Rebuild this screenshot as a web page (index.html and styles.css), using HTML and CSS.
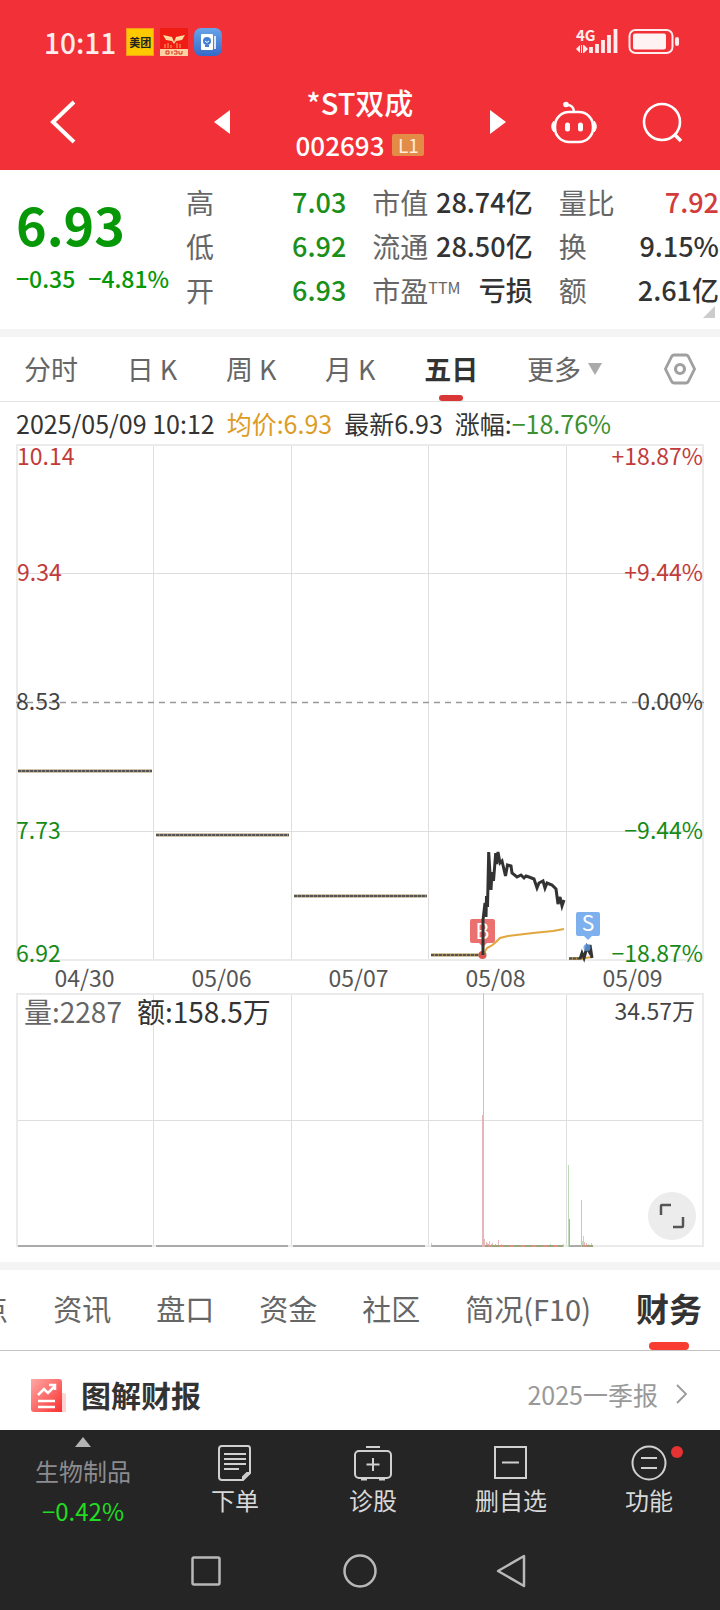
FILE: index.html
```html
<!DOCTYPE html>
<html lang="zh-CN">
<head>
    <meta charset="UTF-8">
    <meta name="viewport" content="width=device-width, initial-scale=1.0">
    <title>*ST双成 002693</title>
    <link rel="stylesheet" href="styles.css">
</head>
<body>
    <header class="top">
        <div class="status-bar">
            <span class="clock">10:11</span>
            <span class="app-icon meituan">美团</span>
            <svg class="app-icon" viewBox="0 0 28 28">
                <rect width="28" height="28" fill="#ee1c12"/>
                <path d="M3 7l9 2 2 5 2-5 9-2-3 5-6 1-2 3-2-3-6-1z" fill="#ffd9a0"/>
                <path d="M5 20v-4M8 20v-5M11 20v-3M17 20v-5M20 20v-4" stroke="#ff7a4a" stroke-width="1.5"/>
                <rect y="21" width="28" height="7" fill="#ffd2a6"/>
                <path d="M6 23h3v3H6zM12 23v3M14 23h3v3h-3M19 23v3h3v-3" fill="none" stroke="#d33019"/>
            </svg>
            <svg class="app-icon" viewBox="0 0 28 28">
                <defs>
                    <linearGradient id="blue" x1="0" y1="0" x2="0" y2="1">
                        <stop offset="0" stop-color="#69a3e8"/>
                        <stop offset="1" stop-color="#3569c9"/>
                    </linearGradient>
                </defs>
                <rect width="28" height="28" rx="7" fill="url(#blue)"/>
                <rect x="7" y="6" width="12" height="16" rx="1" fill="#fff"/>
                <path d="M21 8v13" stroke="#dbe8fb" stroke-width="2"/>
                <circle cx="13" cy="13" r="4" fill="#4380d3"/>
                <path d="M11 17h4v2h-4z" fill="#4380d3"/>
                <path d="M11 13l2 1.500 2-1.500" stroke="#fff" fill="none"/>
            </svg>
            <span class="spacer"></span>
            <svg class="signal" viewBox="0 0 42 28">
                <text x="0" y="13" class="signal-text">4G</text>
                <path d="M0 21l4-4v8zM12 21l-4-4v8z" fill="#ffecec"/>
                <path d="M5.500 17v8M7.500 17v8" stroke="#ffecec" stroke-width="1"/>
                <path d="M15 25v-6M21 25v-9M27 25V12M33 25V7M39.500 25V1" stroke="#ffecec" stroke-width="3.800" stroke-linecap="butt"/>
            </svg>
            <svg class="battery" viewBox="0 0 52 28">
                <rect x="1.500" y="2" width="43" height="23" rx="6" fill="none" stroke="#ffecec" stroke-width="2"/>
                <rect x="5" y="5.500" width="33" height="16" rx="2" fill="#fff2f2"/>
                <rect x="47" y="9" width="4" height="9" rx="2" fill="#ffecec"/>
            </svg>
        </div>
        <div class="title-bar">
            <div class="title-left">
                <button class="icon-btn" aria-label="返回">
                    <svg width="26" height="44" viewBox="0 0 26 44"><path d="M24 2L3 22l21 20" fill="none" stroke="#fff" stroke-width="4"/></svg>
                </button>
            </div>
            <div class="title-center">
                <button class="icon-btn" aria-label="上一只"><svg width="16" height="24" viewBox="0 0 16 24"><path d="M16 0v24L0 12z" fill="#fff"/></svg></button>
                <div class="stock">
                    <h1 class="stock-name">*ST双成</h1>
                    <div class="stock-code">002693<span class="level">L1</span></div>
                </div>
                <button class="icon-btn" aria-label="下一只"><svg width="16" height="24" viewBox="0 0 16 24"><path d="M0 0v24l16-12z" fill="#fff"/></svg></button>
            </div>
            <div class="title-right">
                <button class="icon-btn" aria-label="助手">
                    <svg width="48" height="44" viewBox="0 0 48 44" fill="none" stroke="#fff" stroke-width="2.600">
                        <rect x="5" y="12" width="38" height="30" rx="14"/>
                        <path d="M24 12c0-5-3-7-7-7"/>
                        <circle cx="16" cy="4.500" r="2.800" fill="#fff" stroke="none"/>
                        <path d="M4 21c-3 3-3 8 0 11zM44 21c3 3 3 8 0 11z" fill="#fff" stroke-width="1"/>
                        <path d="M17.500 25v4M30.500 25v4" stroke-width="5" stroke-linecap="round"/>
                    </svg>
                </button>
                <button class="icon-btn" aria-label="搜索">
                    <svg width="42" height="42" viewBox="0 0 42 42" fill="none" stroke="#fff" stroke-width="2.600">
                        <circle cx="20" cy="21" r="18"/>
                        <path d="M32 33l7 7" stroke-width="3.500"/>
                    </svg>
                </button>
            </div>
        </div>
    </header>

    <main>
        <section class="quote">
            <div class="price-box">
                <div class="price">6.93</div>
                <div class="change"><span>−0.35</span><span>−4.81%</span></div>
            </div>
            <dl class="stats">
                <div class="stat"><dt>高</dt><dd class="green">7.03</dd></div>
                <div class="stat"><dt>市值</dt><dd>28.74亿</dd></div>
                <div class="stat"><dt>量比</dt><dd class="red">7.92</dd></div>
                <div class="stat"><dt>低</dt><dd class="green">6.92</dd></div>
                <div class="stat"><dt>流通</dt><dd>28.50亿</dd></div>
                <div class="stat"><dt>换</dt><dd>9.15%</dd></div>
                <div class="stat"><dt>开</dt><dd class="green">6.93</dd></div>
                <div class="stat"><dt>市盈<sup>TTM</sup></dt><dd>亏损</dd></div>
                <div class="stat"><dt>额</dt><dd>2.61亿</dd></div>
            </dl>
            <span class="corner"></span>
        </section>

        <nav class="period">
            <div class="period-tabs">
                <button class="tab">分时</button>
                <button class="tab">日 K</button>
                <button class="tab">周 K</button>
                <button class="tab">月 K</button>
                <button class="tab active">五日</button>
                <button class="tab">更多<span class="caret"></span></button>
            </div>
            <button class="icon-btn" aria-label="设置">
                <svg width="32" height="32" viewBox="0 0 32 32" fill="none" stroke="#a0a0a0">
                    <path d="M10 2h12q1.500 0 2.300 1.500L30.500 16l-6.200 12.500Q23.500 30 22 30H10q-1.500 0-2.300-1.500L1.500 16 7.700 3.500Q8.500 2 10 2z" stroke-width="2.800"/>
                    <circle cx="16" cy="16" r="4.500" stroke-width="3.200"/>
                </svg>
            </button>
        </nav>

        <section class="chart">
            <div class="chart-info">
                <span>2025/05/09 10:12</span>
                <span class="orange">均价:6.93</span>
                <span>最新6.93</span>
                <span>涨幅:<em>−18.76%</em></span>
            </div>

            <svg class="price-chart" viewBox="0 0 688 518">
                <g class="grid">
                    <path d="M0 129.500H688M0 387.500H688M137.500 1V516M275.500 1V516M412.500 1V516M550.500 1V516"/>
                    <rect class="frame" x="1" y="1" width="686" height="515"/>
                </g>
                <path d="M0 258.500H688" stroke="#999" stroke-width="1.500" stroke-dasharray="6 5"/>

                <!-- 一字跌停 -->
                <g class="flat">
                    <path class="flat-base" d="M2 327H136M140 391H273M278 452H411M415 511H467M553 514.500H565"/>
                    <path class="flat-dots" d="M2 327H136M140 391H273M278 452H411M415 511H467M553 514.500H565"/>
                </g>
                <circle cx="466.500" cy="511" r="4" fill="#d9544f"/>
                <path d="M454 477q0-2 2-2h21q2 0 2 2v20q0 2-2 2h-6l-4 4-4-4h-7q-2 0-2-2z" fill="#ea716f"/>
                <text x="466.500" y="495" class="mark">B</text>

                <!-- 均价线 -->
                <path d="M467 511l4-7 4-2 4-3 5-5 8-2 25-3 20-2 11-2" fill="none" stroke="#e0a73c" stroke-width="2"/>
                <path d="M565 515l4-1 7-1" fill="none" stroke="#e0a73c" stroke-width="2"/>

                <!-- 分时线 -->
                <path class="line" d="M467 511V476L469 459 470 473 470.500 452 471.500 463 472.700 408 475 446 476 428 477.500 437 479.700 409 480.500 420 482 408 484 419 486 417 489.500 432 491.500 421 495 422 496 429 501 433 505 431 508 434 510 432 513 433 518 435 521 444 523 439 527 437 529 444 531 439 536 441 540 445 542 460 544 453 546 462 548 456"/>
                <path class="line" d="M564 515L566 509 568 514 571 503 573 507 574 501 576 514"/>
                <circle cx="571" cy="503.500" r="3.500" fill="#5b99e4" fill-opacity=".8"/>
                <path d="M560 470q0-2 2-2h20q2 0 2 2v20q0 2-2 2h-6l-4 4-4-4h-6q-2 0-2-2z" fill="#7eb0ee"/>
                <text x="572" y="487" class="mark">S</text>

                <g class="axis">
                    <text class="up" x="1" y="21">10.14</text>
                    <text class="up" x="1" y="137">9.34</text>
                    <text x="0" y="266">8.53</text>
                    <text class="down" x="0" y="395">7.73</text>
                    <text class="down" x="0" y="518">6.92</text>
                </g>
                <g class="axis axis-right">
                    <text class="up" x="687" y="21">+18.87%</text>
                    <text class="up" x="687" y="137">+9.44%</text>
                    <text x="687" y="266">0.00%</text>
                    <text class="down" x="687" y="395">−9.44%</text>
                    <text class="down" x="687" y="518">−18.87%</text>
                </g>
            </svg>

            <div class="dates">
                <span>04/30</span><span>05/06</span><span>05/07</span><span>05/08</span><span>05/09</span>
            </div>

            <div class="volume">
                <svg class="volume-chart" viewBox="0 0 688 254">
                    <g class="grid">
                        <path d="M0 127.500H688M137.500 1V253M275.500 1V253M412.500 1V253M550.500 1V253"/>
                        <rect class="frame" x="1" y="1" width="686" height="252"/>
                    </g>
                    <path d="M2 253H136M140 253H272M277 253H409M415 253H466M554 253H565" stroke="#aaa" stroke-width="2"/>
                    <g stroke-opacity=".75">
                        <path d="M467.500 0V254M466.500 122V254M565.500 207V254M468.500 246V254M470.500 249V254M472.500 251V254M476.500 250V254M479.500 251V254M482.500 247V254M485.500 251V254M568.500 249V254M570.500 250V254M573.500 252V254" stroke="#dba0a0"/>
                        <path d="M552.500 172V254M415.500 250V254M471.500 250V254M473.500 248V254M475.500 251V254M534.500 251V254M543.500 252V254M547.500 251V254M567.500 243V254M566.500 248V254M572.500 251V254M575.500 250V254" stroke="#a5cf9e"/>
                        <path d="M553.500 226V254" stroke="#79a976"/>
                    </g>
                    <path d="M469 253H547M566 253H577" stroke="#9aa678" stroke-width="2"/>
                    <path d="M472 253H547M567 253H577" stroke="#d9908a" stroke-width="2" stroke-dasharray="4 7"/>
                    <text x="8" y="30" class="vol">量:2287</text>
                    <text x="121" y="30" class="vol vol-dark">额:158.5万</text>
                    <text x="679" y="27" class="vol-max">34.57万</text>
                </svg>
                <button class="expand" aria-label="全屏">
                    <svg width="26" height="26" viewBox="0 0 26 26" fill="none" stroke="#555" stroke-width="2.500">
                        <path d="M2 12V3q0-1 1-1h9M24 14v9q0 1-1 1h-9"/>
                    </svg>
                </button>
            </div>
        </section>

        <nav class="sections">
            <button class="section-tab">点</button>
            <button class="section-tab">资讯</button>
            <button class="section-tab">盘口</button>
            <button class="section-tab">资金</button>
            <button class="section-tab">社区</button>
            <button class="section-tab">简况(F10)</button>
            <button class="section-tab active">财务</button>
        </nav>

        <section class="report">
            <svg width="36" height="34" viewBox="0 0 36 34">
                <defs>
                    <linearGradient id="pink" x1="0" y1="0" x2="1" y2="1">
                        <stop offset="0" stop-color="#ffa9a6"/>
                        <stop offset="1" stop-color="#f9302f"/>
                    </linearGradient>
                </defs>
                <path d="M30 14h3q2 0 2 2v17h-5z" fill="#ffd4d3"/>
                <path d="M0 0h28q3 0 3 3v30H3q-3 0-3-3z" fill="url(#pink)"/>
                <path d="M7 16l6-6 4 4 7-7M18 6h6v5M7 22h17M7 28h17" fill="none" stroke="#fff" stroke-width="2.500"/>
            </svg>
            <h2 class="report-title">图解财报</h2>
            <a class="report-link" href="#">2025一季报<svg width="12" height="20" viewBox="0 0 12 20"><path d="M1 1l9 9-9 9" fill="none" stroke="#999" stroke-width="1.800"/></svg></a>
        </section>
    </main>

    <footer class="bottom">
        <div class="actions">
            <button class="sector">
                <span class="arrow-up"></span>
                <span class="sector-name">生物制品</span>
                <span class="sector-change">−0.42%</span>
            </button>
            <button class="action">
                <svg width="36" height="36" viewBox="0 0 36 36">
                    <path d="M5 1h26q2 0 2 3v24l-7 7H5q-3 0-3-3V4q0-3 3-3zM33 28h-3l-4 4v3M7 9h22M7 14h22M7 19h22M7 24h15"/>
                </svg>
                下单
            </button>
            <button class="action">
                <svg width="40" height="36" viewBox="0 0 40 36">
                    <rect x="2" y="6" width="36" height="27" rx="4"/>
                    <path d="M13 2h14M20 13v13M13.500 19.500h13"/>
                    <path d="M8 34h6M26 34h6" stroke-width="3"/>
                </svg>
                诊股
            </button>
            <button class="action">
                <svg width="36" height="36" viewBox="0 0 36 36">
                    <rect x="2" y="2" width="31" height="31"/>
                    <path d="M9 17.500h17"/>
                </svg>
                删自选
            </button>
            <button class="action">
                <svg width="36" height="36" viewBox="0 0 36 36">
                    <circle cx="18" cy="18" r="16.500"/>
                    <path d="M10 13h16M10 23h16"/>
                </svg>
                功能
                <span class="dot"></span>
            </button>
        </div>
        <div class="system-nav">
            <button class="icon-btn" aria-label="最近任务"><svg width="36" height="36" viewBox="0 0 36 36"><rect x="4.500" y="4.500" width="27" height="27" rx="1.500"/></svg></button>
            <button class="icon-btn" aria-label="主页"><svg width="36" height="36" viewBox="0 0 36 36"><circle cx="18" cy="18" r="15.500"/></svg></button>
            <button class="icon-btn" aria-label="返回上级"><svg width="36" height="36" viewBox="0 0 36 36"><path d="M28 3v30L2 18z" stroke-linejoin="round"/></svg></button>
        </div>
    </footer>
</body>
</html>
```
FILE: styles.css
```css
* {
    margin: 0;
    padding: 0;
    box-sizing: border-box;
}

body {
    font-family: "Noto Sans CJK SC", "Noto Sans", sans-serif;
    background: #fff;
    color: #333;
    overflow-x: hidden;
}

button {
    font: inherit;
    color: inherit;
    background: none;
    border: none;
    cursor: pointer;
}

svg {
    display: block;
}

.icon-btn {
    display: flex;
    align-items: center;
    justify-content: center;
}

/* header */
.top {
    background: #f23038;
    color: #fff;
    height: 170px;
}

.status-bar {
    display: flex;
    align-items: center;
    gap: 6px;
    height: 84px;
    padding: 0 40px 0 44px;
}

.clock {
    font-size: 28px;
    font-weight: 500;
    color: #ffecec;
    margin-right: 4px;
}

.app-icon {
    width: 28px;
    height: 28px;
}

.meituan {
    background: #ffc900;
    border: 1px solid #f99a1c;
    color: #222;
    font-size: 11px;
    font-weight: bold;
    line-height: 26px;
    text-align: center;
}

.spacer {
    flex: 1;
}

.signal {
    width: 42px;
    height: 28px;
    margin-right: 4px;
    overflow: visible;
}

.signal-text {
    font-size: 15px;
    font-weight: bold;
    fill: #ffecec;
}

.battery {
    width: 52px;
    height: 28px;
}

.title-bar {
    display: grid;
    grid-template-columns: 1fr 292px 1fr;
    grid-template-rows: 76px;
    align-items: center;
}

.title-left,
.title-right {
    display: flex;
    align-items: center;
}

.title-left {
    padding-left: 50px;
}

.title-right {
    justify-content: flex-end;
    gap: 44px;
    padding-right: 36px;
}

.title-center {
    display: flex;
    align-items: center;
    justify-content: space-between;
}

.stock {
    padding-top: 3px;
    text-align: center;
}

.stock-name {
    font-size: 29px;
    font-weight: 500;
    line-height: 42px;
}

.stock-code {
    display: flex;
    align-items: center;
    justify-content: center;
    gap: 8px;
    font-size: 26px;
    font-weight: 500;
    line-height: 44px;
}

.level {
    width: 32px;
    height: 22px;
    border-radius: 2px;
    background: #e28c47;
    color: #ffeedd;
    font-size: 19px;
    font-weight: normal;
    line-height: 22px;
}

/* quote */
.quote {
    position: relative;
    display: flex;
    padding: 10px 1px 17px 0;
    border-bottom: 8px solid #f4f4f4;
}

.price-box {
    width: 186px;
    padding: 10px 0 0 16px;
    color: #069806;
}

.price {
    font-size: 52px;
    font-weight: bold;
    line-height: 68px;
}

.change {
    display: flex;
    gap: 13px;
    font-size: 23px;
    font-weight: 500;
    line-height: 40px;
    white-space: nowrap;
}

.stats {
    flex: 1;
    display: grid;
    grid-template-columns: repeat(3, 1fr);
    column-gap: 26px;
}

.stat {
    display: flex;
    justify-content: space-between;
    font-size: 28px;
    line-height: 44px;
    white-space: nowrap;
}

.stat dt {
    color: #666;
}

.stat dd {
    font-size: 27px;
    font-weight: 500;
}

.stat sup {
    font-size: 16px;
    line-height: 16px;
    vertical-align: 8px;
}

.green {
    color: #1a8f1a;
}

.red {
    color: #d23c3c;
}

.corner {
    position: absolute;
    right: 5px;
    bottom: 11px;
    border-left: 12px solid transparent;
    border-bottom: 12px solid #ccc;
}

/* period tabs */
.period {
    display: flex;
    align-items: center;
    gap: 62px;
    height: 65px;
    padding: 0 24px;
    border-bottom: 1px solid #e4e4e4;
}

.period-tabs {
    flex: 1;
    display: flex;
    justify-content: space-between;
}

.tab {
    position: relative;
    display: flex;
    align-items: center;
    font-size: 27px;
    line-height: 64px;
    color: #666;
    white-space: pre;
}

.active {
    font-weight: bold;
    color: #333;
}

.active::after {
    content: "";
    position: absolute;
    left: 50%;
    bottom: 0;
    width: 24px;
    height: 6px;
    border-radius: 3px;
    background: #d93636;
    transform: translateX(-50%);
}

.caret {
    margin-left: 7px;
    border: 7px solid transparent;
    border-top: 12px solid #aaa;
    border-bottom: 0;
}

/* chart */
.chart {
    padding: 0 16px 15px;
    border-bottom: 8px solid #f4f4f4;
}

.chart-info {
    display: flex;
    gap: 12px;
    font-size: 25px;
    line-height: 42px;
    white-space: nowrap;
}

.orange {
    color: #dd9c26;
}

.chart-info em {
    font-style: normal;
    color: #3c9030;
}

.price-chart,
.volume-chart {
    width: 100%;
    height: auto;
    overflow: visible;
}

.grid {
    fill: none;
    stroke: #dedede;
    stroke-width: 1;
}

.frame {
    stroke: #ebebeb;
    stroke-width: 2;
}

.flat {
    fill: none;
    stroke-width: 2;
}

.flat-base {
    stroke: #a58b55;
    stroke-width: 3;
}

.flat-dots {
    stroke: #555;
    stroke-dasharray: 3 1;
}

.line {
    fill: none;
    stroke: #333;
    stroke-width: 3;
}

.mark {
    font-size: 21px;
    fill: #fff;
    text-anchor: middle;
}

.axis {
    font-size: 23px;
    fill: #444;
}

.axis-right {
    text-anchor: end;
}

.up {
    fill: #c23b3b;
}

.down {
    fill: #168a16;
}

.dates {
    display: flex;
    padding-right: 3px;
    font-size: 23px;
    line-height: 31px;
    color: #555;
}

.dates span {
    flex: 1;
    text-align: center;
}

.volume {
    position: relative;
}

.vol {
    font-size: 28px;
    fill: #666;
}

.vol-dark {
    fill: #333;
}

.vol-max {
    font-size: 23px;
    fill: #444;
    text-anchor: end;
}

.expand {
    position: absolute;
    right: 8px;
    bottom: 7px;
    display: flex;
    align-items: center;
    justify-content: center;
    width: 48px;
    height: 48px;
    border-radius: 50%;
    background: #ececec;
}

/* section tabs */
.sections {
    display: flex;
    justify-content: flex-end;
    gap: 45px;
    height: 81px;
    padding-right: 18px;
    border-bottom: 1px solid #c4c4c4;
    overflow: hidden;
}

.section-tab {
    position: relative;
    flex-shrink: 0;
    height: 80px;
    padding-bottom: 4px;
    font-size: 29px;
    line-height: 76px;
    color: #666;
    white-space: nowrap;
}

.section-tab.active {
    font-size: 33px;
    color: #333;
}

.section-tab.active::after {
    bottom: 0;
    width: 40px;
    height: 8px;
    border-radius: 4px;
    background: #f93c32;
}

/* report */
.report {
    display: flex;
    align-items: center;
    height: 79px;
    padding: 10px 32px 0 31px;
}

.report-title {
    flex: 1;
    margin-left: 14px;
    padding-bottom: 4px;
    font-size: 30px;
    line-height: 40px;
}

.report-link {
    display: flex;
    align-items: center;
    gap: 18px;
    padding-bottom: 4px;
    font-size: 25px;
    line-height: 40px;
    color: #999;
    text-decoration: none;
}

/* bottom bar */
.bottom {
    background: #252525;
    color: #d8d8d8;
}

.actions {
    display: flex;
    height: 102px;
    padding-right: 2px;
}

.sector {
    display: flex;
    flex-direction: column;
    align-items: center;
    width: 166px;
    padding-top: 7px;
    font-size: 24px;
    line-height: 40px;
}

.arrow-up {
    border: 8px solid transparent;
    border-top: 0;
    border-bottom: 10px solid #b4b4b4;
    margin-bottom: 4px;
}

.sector-name {
    color: #8b8b90;
}

.sector-change {
    color: #22dc22;
}

.action {
    position: relative;
    flex: 1;
    display: flex;
    flex-direction: column;
    align-items: center;
    padding-top: 15px;
    font-size: 24px;
    line-height: 38px;
}

.action svg {
    fill: none;
    stroke: #d0d0d0;
    stroke-width: 2;
}

.dot {
    position: absolute;
    top: 16px;
    left: 50%;
    width: 12px;
    height: 12px;
    margin-left: 22px;
    border-radius: 50%;
    background: #e63232;
}

.system-nav {
    display: flex;
    justify-content: space-around;
    height: 78px;
    padding: 0 18%;
}

.system-nav svg {
    fill: none;
    stroke: #b8b8b8;
    stroke-width: 2.5;
}
```
